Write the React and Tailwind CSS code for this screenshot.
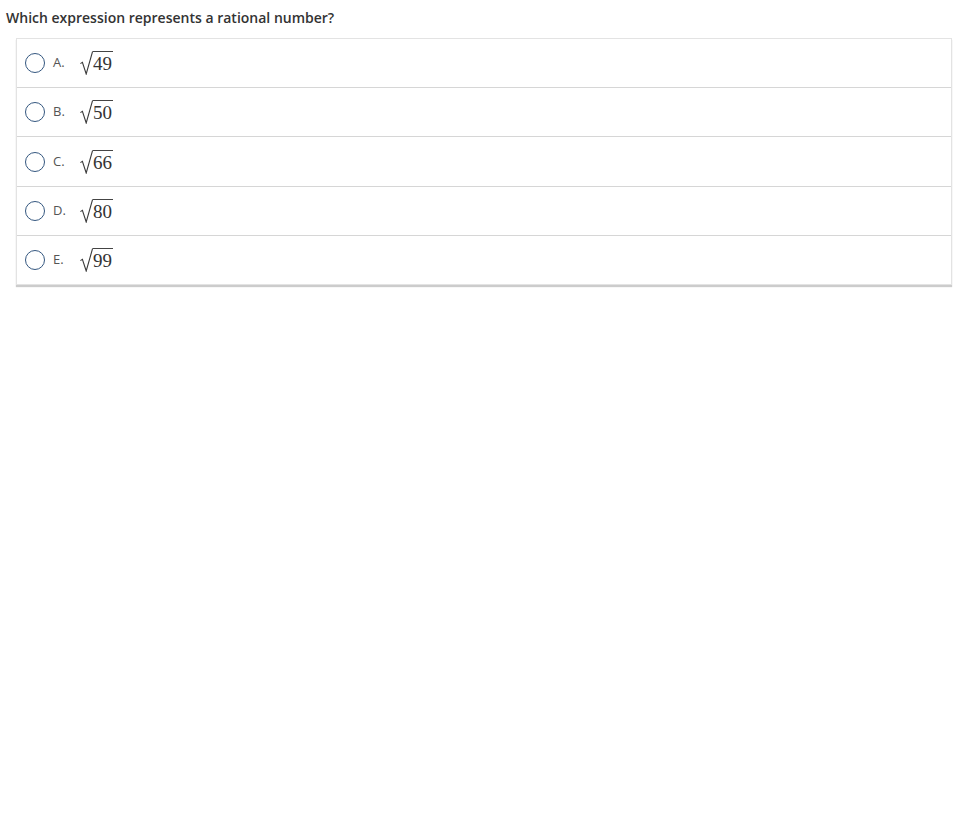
const options = [
  { letter: 'A.', value: '49', h: 'h-[49px]' },
  { letter: 'B.', value: '50', h: 'h-[49px]' },
  { letter: 'C.', value: '66', h: 'h-[50px]' },
  { letter: 'D.', value: '80', h: 'h-[49px]' },
  { letter: 'E.', value: '99', h: 'h-[48px]' },
];

function Sqrt({ value }) {
  return (
    <span className="inline-flex items-start">
      <svg width="13" height="24" viewBox="0 0 13 24" className="block">
        <path d="M0.4 12.6 L2.4 11.4 L6.2 23 L12.6 0.5" fill="none" stroke="#3a3a3a" strokeWidth="1.1" />
      </svg>
      <span
        className="border-t border-[#444] pt-[2px] pr-[1px] text-[19px] leading-[20px] text-[#333]"
        style={{ fontFamily: '"Liberation Serif", "Times New Roman", serif' }}
      >
        {value}
      </span>
    </span>
  );
}

export default function App() {
  return (
    <div className="min-h-screen bg-white pt-[8px] pl-[6px]" style={{ fontFamily: '"Open Sans", sans-serif' }}>
      <div className="h-[20px] text-[14px] font-semibold leading-[20px] text-[#333]">
        Which expression represents a rational number?
      </div>
      <div className="mt-[10px] ml-[10px] w-[936px] border border-[#e3e3e3] shadow-[0_2px_1px_rgba(0,0,0,0.2)]">
        {options.map((opt, i) => (
          <div
            key={opt.letter}
            className={`flex ${opt.h} items-center pl-[8px] ${i < options.length - 1 ? 'border-b border-[#d6d6d6]' : ''}`}
          >
            <span className="h-[20px] w-[20px] rounded-full border-[1.5px] border-[#34577f]" />
            <span className="ml-[8px] w-[27px] text-[13px] text-[#555]">{opt.letter}</span>
            <Sqrt value={opt.value} />
          </div>
        ))}
      </div>
    </div>
  );
}
